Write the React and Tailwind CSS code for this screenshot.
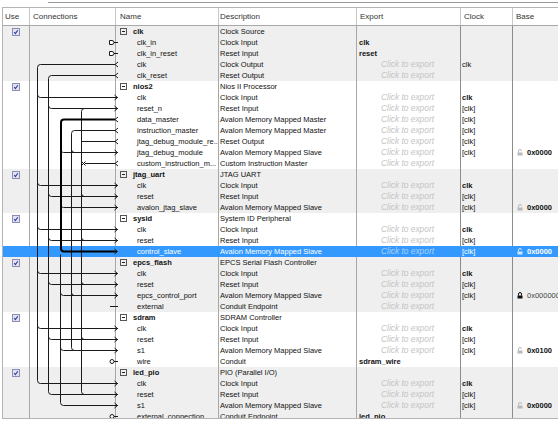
import React from 'react';

const C = 'c';

const comps = [
  { name: 'clk', desc: 'Clock Source', ports: [
    { name: 'clk_in', desc: 'Clock Input', exp: 'clk' },
    { name: 'clk_in_reset', desc: 'Reset Input', exp: 'reset' },
    { name: 'clk', desc: 'Clock Output', exp: C, clock: 'clk' },
    { name: 'clk_reset', desc: 'Reset Output', exp: C },
  ]},
  { name: 'nios2', desc: 'Nios II Processor', ports: [
    { name: 'clk', desc: 'Clock Input', exp: C, clock: 'clk', bold: true },
    { name: 'reset_n', desc: 'Reset Input', exp: C, clock: '[clk]' },
    { name: 'data_master', desc: 'Avalon Memory Mapped Master', exp: C, clock: '[clk]' },
    { name: 'instruction_master', desc: 'Avalon Memory Mapped Master', exp: C, clock: '[clk]' },
    { name: 'jtag_debug_module_re...', desc: 'Reset Output', exp: C, clock: '[clk]' },
    { name: 'jtag_debug_module', desc: 'Avalon Memory Mapped Slave', exp: C, clock: '[clk]', base: '0x0000' },
    { name: 'custom_instruction_m...', desc: 'Custom Instruction Master', exp: C },
  ]},
  { name: 'jtag_uart', desc: 'JTAG UART', ports: [
    { name: 'clk', desc: 'Clock Input', exp: C, clock: 'clk', bold: true },
    { name: 'reset', desc: 'Reset Input', exp: C, clock: '[clk]' },
    { name: 'avalon_jtag_slave', desc: 'Avalon Memory Mapped Slave', exp: C, clock: '[clk]', base: '0x0000' },
  ]},
  { name: 'sysid', desc: 'System ID Peripheral', ports: [
    { name: 'clk', desc: 'Clock Input', exp: C, clock: 'clk', bold: true },
    { name: 'reset', desc: 'Reset Input', exp: C, clock: '[clk]' },
    { name: 'control_slave', desc: 'Avalon Memory Mapped Slave', exp: C, clock: '[clk]', base: '0x0000', sel: true },
  ]},
  { name: 'epcs_flash', desc: 'EPCS Serial Flash Controller', ports: [
    { name: 'clk', desc: 'Clock Input', exp: C, clock: 'clk', bold: true },
    { name: 'reset', desc: 'Reset Input', exp: C, clock: '[clk]' },
    { name: 'epcs_control_port', desc: 'Avalon Memory Mapped Slave', exp: C, clock: '[clk]', base: '0x000000', locked: true },
    { name: 'external', desc: 'Conduit Endpoint', exp: C },
  ]},
  { name: 'sdram', desc: 'SDRAM Controller', ports: [
    { name: 'clk', desc: 'Clock Input', exp: C, clock: 'clk', bold: true },
    { name: 'reset', desc: 'Reset Input', exp: C, clock: '[clk]' },
    { name: 's1', desc: 'Avalon Memory Mapped Slave', exp: C, clock: '[clk]', base: '0x0100' },
    { name: 'wire', desc: 'Conduit', exp: 'sdram_wire' },
  ]},
  { name: 'led_pio', desc: 'PIO (Parallel I/O)', ports: [
    { name: 'clk', desc: 'Clock Input', exp: C, clock: 'clk', bold: true },
    { name: 'reset', desc: 'Reset Input', exp: C, clock: '[clk]' },
    { name: 's1', desc: 'Avalon Memory Mapped Slave', exp: C, clock: '[clk]', base: '0x0000' },
    { name: 'external_connection', desc: 'Conduit Endpoint', exp: 'led_pio' },
  ]},
];

const rows = [];
comps.forEach((c, g) => {
  rows.push({ head: true, name: c.name, desc: c.desc, g });
  c.ports.forEach((p) => rows.push({ ...p, g }));
});

const Y = (i) => i * 11 + 5.5;

function Check() {
  return (
    <svg width="8" height="8" viewBox="0 0 8 8">
      <rect x="0.5" y="0.5" width="7" height="7" fill="#e2e2f2" stroke="#8c8cb4" />
      <path d="M2.2 4.2 L3.4 5.6 L5.8 2.2" fill="none" stroke="#2a3f9a" strokeWidth="1.1" />
    </svg>
  );
}

function Minus() {
  return (
    <svg width="7" height="7" viewBox="0 0 7 7" className="shrink-0">
      <rect x="0.5" y="0.5" width="6" height="6" fill="none" stroke="#555" />
      <path d="M2 3.5 H5" stroke="#222" />
    </svg>
  );
}

function Lock({ open, color }) {
  return (
    <svg width="6" height="7" viewBox="0 0 6 7" className="shrink-0">
      {open ? (
        <path d="M1.5 3.5 V2 a1.5 1.5 0 0 1 3 0" fill="none" stroke={color} />
      ) : (
        <path d="M1.5 3.5 V2 a1.5 1.5 0 0 1 3 0 V3.5" fill="none" stroke={color} />
      )}
      <rect x="0.5" y="3.5" width="5" height="3" fill={color} />
    </svg>
  );
}

function Connections() {
  const s = '#1a1a1a';
  const paths = [];
  const branchDown = (x, i) => `M${x} ${Y(i) - 3} Q${x} ${Y(i)} ${x + 3} ${Y(i)} L115 ${Y(i)}`;
  const branchUp = (x, i) => `M${x} ${Y(i) + 3} Q${x} ${Y(i)} ${x + 3} ${Y(i)} L115 ${Y(i)}`;
  const srcTop = (x, i) => `M112 ${Y(i)} L${x + 3} ${Y(i)} Q${x} ${Y(i)} ${x} ${Y(i) + 3}`;
  const vert = (x, a, b) => `M${x} ${Y(a) + 3} L${x} ${Y(b) - 3}`;

  // clk bus
  paths.push(srcTop(34.5, 3), vert(34.5, 3, 32));
  [6, 14, 18, 22, 27, 32].forEach((i) => paths.push(branchDown(34.5, i)));
  // clk_reset bus
  paths.push(srcTop(45.5, 4), vert(45.5, 4, 33));
  [7, 15, 19, 23, 28, 33].forEach((i) => paths.push(branchDown(45.5, i)));
  // data_master bus (thin part)
  paths.push(vert(57.5, 20, 34));
  [11, 16, 24, 29, 34].forEach((i) => paths.push(branchDown(57.5, i)));
  // instruction_master
  paths.push(srcTop(68.5, 9), vert(68.5, 9, 29));
  [11, 24, 29].forEach((i) => paths.push(branchDown(68.5, i)));
  // jtag_debug_module_reset
  paths.push(`M112 ${Y(10)} L78.5 ${Y(10)}`, vert(78.5, 7, 33), branchUp(78.5, 7));
  [15, 19, 23, 28, 33].forEach((i) => paths.push(branchDown(78.5, i)));
  // custom instruction
  paths.push(`M82 ${Y(12)} L112 ${Y(12)}`);
  // external (not exported)
  paths.push(`M107 ${Y(25)} L115 ${Y(25)}`);

  const inputs = [6, 7, 11, 14, 15, 16, 18, 19, 20, 22, 23, 24, 27, 28, 29, 32, 33, 34];
  const outputs = [3, 4, 8, 9, 10, 12];

  return (
    <svg className="absolute left-0 top-0 pointer-events-none" width="116" height="396">
      {paths.map((d, k) => (
        <path key={k} d={d} fill="none" stroke={s} strokeWidth="1" />
      ))}
      {/* highlighted data_master -> control_slave */}
      <path
        d={`M112 ${Y(8)} L61 ${Y(8)} Q58 ${Y(8)} 58 ${Y(8) + 3} L58 ${Y(20) - 3} Q58 ${Y(20)} 61 ${Y(20)} L114 ${Y(20)}`}
        fill="none"
        stroke="#000"
        strokeWidth="2"
      />
      {inputs.map((i) => (
        <path key={'i' + i} d={`M111.5 ${Y(i) - 2.5} L114.5 ${Y(i)} L111.5 ${Y(i) + 2.5}`} fill="none" stroke={s} />
      ))}
      {outputs.map((i) => (
        <path key={'o' + i} d={`M115 ${Y(i) - 2.5} L112 ${Y(i)} L115 ${Y(i) + 2.5}`} fill="none" stroke={s} />
      ))}
      {[1, 2].map((i) => (
        <g key={'d' + i}>
          <path d={`M106.5 ${Y(i) - 2} H109 a2 2 0 0 1 0 4 H106.5 Z`} fill="#fff" stroke={s} />
          <path d={`M111 ${Y(i)} H115`} stroke={s} />
        </g>
      ))}
      {[30, 35].map((i) => (
        <g key={'w' + i}>
          <circle cx="109" cy={Y(i)} r="2" fill="#fff" stroke={s} />
          <path d={`M111 ${Y(i)} H115`} stroke={s} />
        </g>
      ))}
      <path d={`M78.5 ${Y(12) - 2} L82.5 ${Y(12) + 2} M82.5 ${Y(12) - 2} L78.5 ${Y(12) + 2}`} stroke={s} />
    </svg>
  );
}

function Row({ r }) {
  const bg = r.sel ? 'bg-[#3399ff] text-white' : r.g % 2 === 0 ? 'bg-[#efefef]' : 'bg-white';
  const line = r.sel ? 'border-[#3399ff]' : 'border-[#a8a8a8]';
  return (
    <div className={`flex h-[11px] leading-[11px] whitespace-nowrap ${bg}`}>
      <div className={`w-[27px] shrink-0 border-r ${line} flex items-center justify-center`}>{r.head && <Check />}</div>
      <div className={`w-[86px] shrink-0 border-r ${line}`} />
      <div className={`w-[103px] shrink-0 border-r ${line} overflow-hidden flex items-center`}>
        {r.head ? (
          <div className="flex items-center pl-[4px] gap-[6px]">
            <Minus />
            <span className="font-bold">{r.name}</span>
          </div>
        ) : (
          <span className="pl-[21px]">{r.name}</span>
        )}
      </div>
      <div className={`w-[138px] shrink-0 border-r ${line} pl-[1px] overflow-hidden`}>{r.desc}</div>
      <div className={`w-[104px] shrink-0 border-r ${r.sel ? 'border-[#3399ff]' : 'border-[#8c8c8c]'} overflow-hidden`}>
        {r.exp === C ? (
          <div className={`text-center italic text-[8.4px] pr-[2px] ${r.sel ? 'text-[#a9d2fb]' : 'text-[#c4c4c4]'}`}>Click to export</div>
        ) : r.exp ? (
          <span className="pl-[2px] font-bold">{r.exp}</span>
        ) : null}
      </div>
      <div className={`w-[52px] shrink-0 border-r ${r.sel ? 'border-[#3399ff]' : 'border-[#8c8c8c]'} pl-[1px] ${r.bold ? 'font-bold' : ''}`}>
        {r.clock}
      </div>
      <div className="flex-1 flex items-center pl-[4px] gap-[4px] overflow-hidden">
        {r.base && (
          <>
            <Lock open={!r.locked} color={r.locked ? '#111' : r.sel ? '#cfe6ff' : '#b8b8b8'} />
            <span className={r.locked ? 'text-[#444]' : 'font-bold'}>{r.base}</span>
          </>
        )}
      </div>
    </div>
  );
}

export default function App() {
  return (
    <div
      className="w-[558px] h-[424px] bg-white overflow-hidden text-[7.5px] text-[#111]"
      style={{ fontFamily: '"Liberation Sans", Arial, sans-serif' }}
    >
      <div className="mt-[2px] ml-[48px] h-px bg-[#9a9a9a]" />
      <div className="mt-[4px] ml-[2px] border-l border-t border-b border-[#b4b4b4]">
        <div className="flex h-[18px] items-center border-b border-[#a8a8a8] bg-white text-[#333] text-[8px]">
          <div className="w-[27px] h-full border-r border-[#c8c8c8] pl-[2px] flex items-center">Use</div>
          <div className="w-[86px] h-full border-r border-[#c8c8c8] pl-[3px] flex items-center">Connections</div>
          <div className="w-[103px] h-full border-r border-[#c8c8c8] pl-[4px] flex items-center">Name</div>
          <div className="w-[138px] h-full border-r border-[#c8c8c8] pl-[1px] flex items-center">Description</div>
          <div className="w-[104px] h-full border-r border-[#c8c8c8] pl-[3px] flex items-center">Export</div>
          <div className="w-[52px] h-full border-r border-[#c8c8c8] pl-[3px] flex items-center">Clock</div>
          <div className="flex-1 h-full pl-[3px] flex items-center">Base</div>
        </div>
        <div className="relative h-[392px] overflow-hidden">
          {rows.map((r, i) => (
            <Row key={i} r={r} />
          ))}
          <Connections />
        </div>
      </div>
    </div>
  );
}
